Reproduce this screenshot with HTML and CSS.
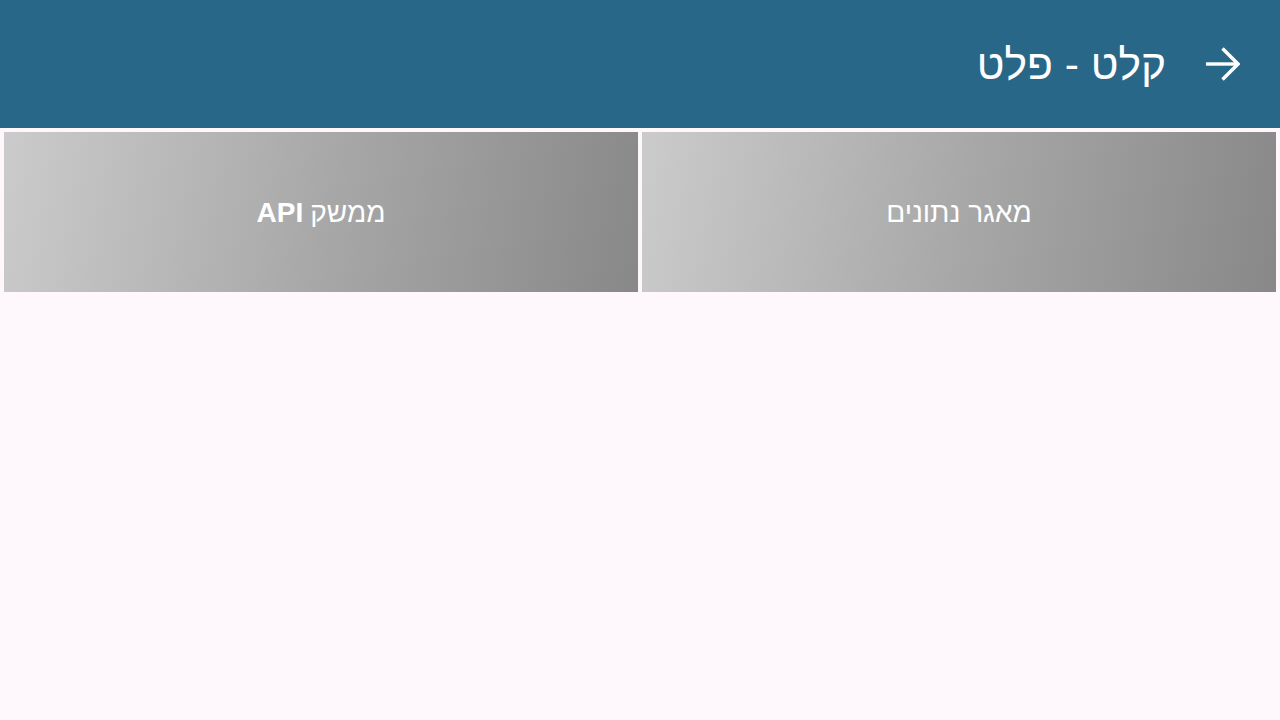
FILE: index.html
```html
<!DOCTYPE html>
<html lang="he" dir="rtl">
<head>
<meta charset="utf-8">
<title>קלט - פלט</title>
<link rel="stylesheet" href="styles.css">
</head>
<body>
<header class="topbar">
  <button class="back" aria-label="חזרה">
    <svg width="34" height="34" viewBox="0 0 34 34" fill="none" stroke="#fff" stroke-width="3.4" stroke-linecap="butt" stroke-linejoin="miter">
      <path d="M0 17H32"/>
      <path d="M16.5 1.5L32 17L16.5 32.5"/>
    </svg>
  </button>
  <h1 class="title">קלט - פלט</h1>
</header>
<main class="tiles">
  <a class="tile" href="#">מאגר נתונים</a>
  <a class="tile" href="#">ממשק <b>API</b></a>
</main>
</body>
</html>
```
FILE: styles.css
```css
html, body {
  margin: 0;
  padding: 0;
}
body {
  background: #fef8fd;
  font-family: "Liberation Sans", Arial, sans-serif;
  width: 1280px;
  height: 720px;
}
.topbar {
  height: 128px;
  background: #296789;
  display: flex;
  align-items: center;
  padding-right: 40px;
  box-sizing: border-box;
  gap: 40px;
}
.back {
  background: none;
  border: 0;
  padding: 0;
  width: 34px;
  height: 34px;
  display: flex;
  cursor: pointer;
}
.title {
  margin: 0;
  color: #fff;
  font-weight: normal;
  font-size: 42.5px;
  line-height: 1;
  position: relative;
  top: 1px;
}
.tiles {
  display: grid;
  grid-template-columns: 1fr 1fr;
  gap: 4px;
  padding: 4px;
}
.tile {
  height: 160px;
  display: flex;
  align-items: center;
  justify-content: center;
  color: #fff;
  text-decoration: none;
  font-size: 28px;
  padding-top: 2px;
  box-sizing: border-box;
  background: linear-gradient(100deg, #cbcbcb 0%, #a8a8a8 50%, #888888 100%);
}
.tile b {
  font-weight: bold;
  margin-right: 7px;
}
```
